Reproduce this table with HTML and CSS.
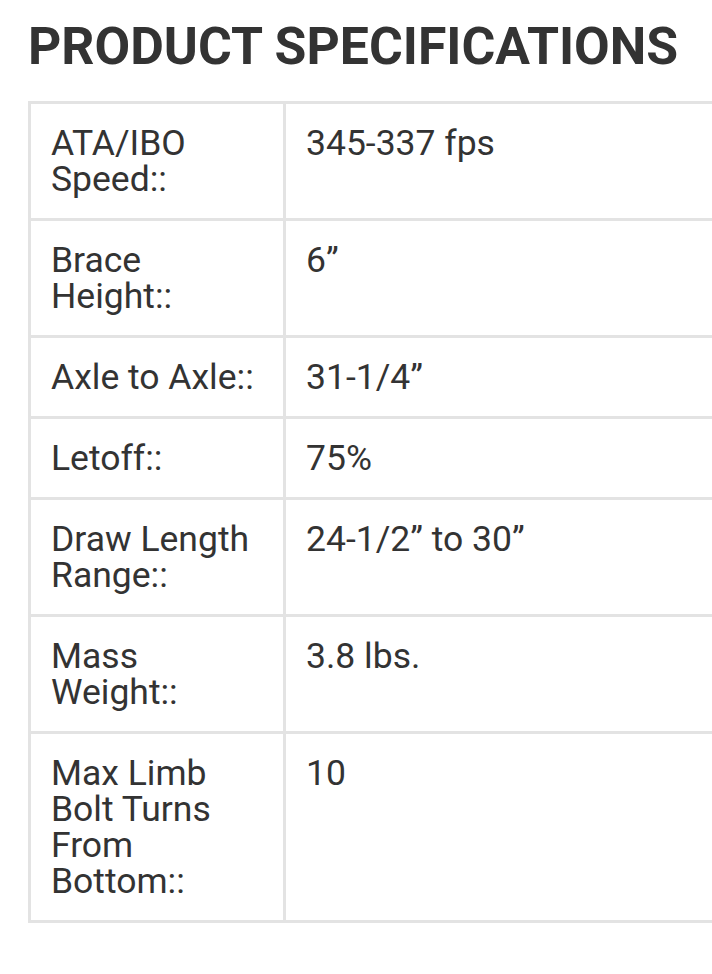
FILE: index.html
```html
<!DOCTYPE html>
<html>
<head>
<meta charset="utf-8">
<link rel="stylesheet" href="styles.css">
</head>
<body>
<div class="page">
  <h1 class="title">PRODUCT SPECIFICATIONS</h1>
  <table class="specs">
    <tr><td class="label">ATA/IBO Speed::</td><td class="value">345-337 fps</td></tr>
    <tr><td class="label">Brace Height::</td><td class="value">6”</td></tr>
    <tr><td class="label">Axle to Axle::</td><td class="value">31-1/4”</td></tr>
    <tr><td class="label">Letoff::</td><td class="value">75%</td></tr>
    <tr><td class="label">Draw Length Range::</td><td class="value">24-1/2” to 30”</td></tr>
    <tr><td class="label">Mass Weight::</td><td class="value">3.8 lbs.</td></tr>
    <tr><td class="label">Max Limb Bolt Turns From Bottom::</td><td class="value">10</td></tr>
  </table>
</div>
</body>
</html>
```
FILE: styles.css
```css
html, body {
  margin: 0;
  padding: 0;
  background: #fff;
  overflow: hidden;
}
.page {
  padding: 0 0 0 28px;
  font-family: Roboto, "Liberation Sans", sans-serif;
  color: #333;
}
.title {
  margin: 0;
  padding-top: 17px;
  font-size: 52px;
  line-height: 60px;
  font-weight: 700;
  white-space: nowrap;
  transform: scaleX(0.995);
  transform-origin: left center;
}
.specs {
  margin-top: 24px;
  border-collapse: collapse;
  width: 720px;
  font-size: 35.5px;
  line-height: 36px;
}
.specs td {
  border: 3px solid #e3e3e3;
  padding: 21px 20px 21px 20px;
  vertical-align: top;
}
.specs .label {
  width: 212px;
}
```
